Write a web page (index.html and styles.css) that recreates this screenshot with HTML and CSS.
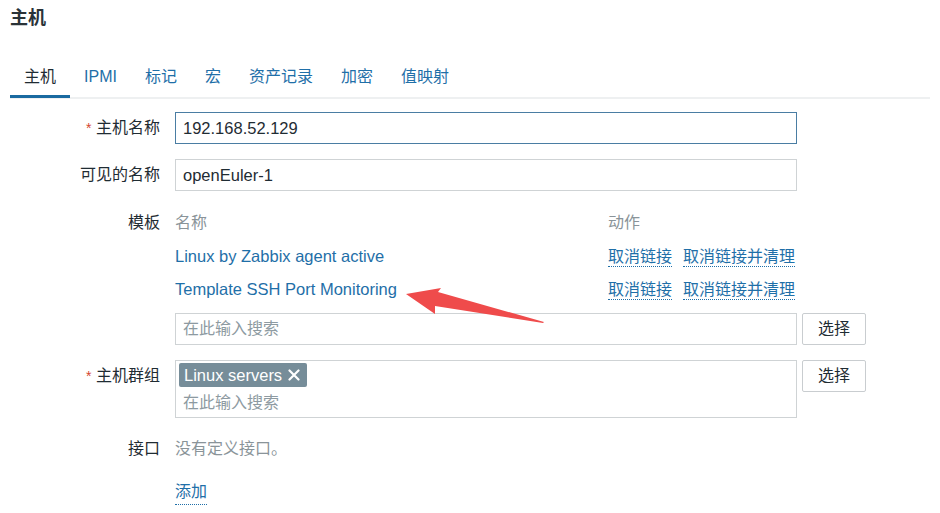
FILE: index.html
```html
<!DOCTYPE html>
<html lang="zh">
<head>
<meta charset="utf-8">
<link rel="stylesheet" href="styles.css">
</head>
<body>
<div class="page">
  <h1 class="title">主机</h1>
  <ul class="tabs">
    <li class="tab active">主机</li>
    <li class="tab">IPMI</li>
    <li class="tab">标记</li>
    <li class="tab">宏</li>
    <li class="tab">资产记录</li>
    <li class="tab">加密</li>
    <li class="tab">值映射</li>
  </ul>
  <div class="form">
    <div class="row">
      <div class="label"><span class="req">*</span> 主机名称</div>
      <div class="field"><div class="input focused">192.168.52.129</div></div>
    </div>
    <div class="row">
      <div class="label">可见的名称</div>
      <div class="field"><div class="input">openEuler-1</div></div>
    </div>
    <div class="row templates">
      <div class="label tl">模板</div>
      <div class="field">
        <div class="trow thead"><span class="tname">名称</span><span class="tact">动作</span></div>
        <div class="trow"><a class="tname link">Linux by Zabbix agent active</a><span class="tact"><a class="dlink first">取消链接</a><a class="dlink">取消链接并清理</a></span></div>
        <div class="trow"><a class="tname link">Template SSH Port Monitoring</a><span class="tact"><a class="dlink first">取消链接</a><a class="dlink">取消链接并清理</a></span></div>
        <div class="withbtn">
          <div class="input ph">在此输入搜索</div>
          <div class="btn">选择</div>
        </div>
      </div>
    </div>
    <div class="row">
      <div class="label gl"><span class="req">*</span> 主机群组</div>
      <div class="field withbtn top">
        <div class="multi">
          <span class="tag">Linux servers <svg class="x" width="12" height="12" viewBox="0 0 12 12"><path d="M1.5 1.5 L10.5 10.5 M10.5 1.5 L1.5 10.5" stroke="#fff" stroke-width="2.2" stroke-linecap="round"/></svg></span>
          <div class="ph2">在此输入搜索</div>
        </div>
        <div class="btn">选择</div>
      </div>
    </div>
    <div class="row plain">
      <div class="label">接口</div>
      <div class="field gray">没有定义接口。</div>
    </div>
    <div class="row plain">
      <div class="label"></div>
      <div class="field"><a class="dlink">添加</a></div>
    </div>
  </div>
  <svg class="arrow" width="160" height="50" viewBox="0 0 160 50">
    <polygon points="6,13 41,7 38,11 144,41 143,42 35,25 35,33" fill="#ef4b4b"/>
  </svg>
</div>
</body>
</html>
```
FILE: styles.css
```css
* { box-sizing: border-box; }
body {
  margin: 0;
  background: #fff;
  font-family: "Liberation Sans", Arial, "Noto Sans CJK SC", sans-serif;
  font-size: 16px;
  color: #1f2c33;
}
.page { position: relative; padding: 0 10px; }
.title {
  margin: 0;
  height: 36px;
  padding-top: 3px;
  font-size: 18px;
  font-weight: bold;
  color: #2a3338;
}
.tabs {
  list-style: none;
  margin: 21px 0 0 0;
  padding: 0;
  display: flex;
  border-bottom: 2px solid #eef0f1;
  height: 42px;
}
.tab {
  padding: 9px 14px 0;
  color: #1f6fa8;
  height: 40px;
  line-height: 22px;
}
.tab.active {
  color: #1f2c33;
  border-bottom: 3px solid #1a6aa0;
  height: 41px;
  margin-bottom: -1px;
}
.form { padding-top: 13px; }
.row { display: flex; margin-bottom: 15px; }
.label {
  width: 150px;
  text-align: right;
  line-height: 32px;
  flex: none;
}
.req { color: #d4462f; font-size: 14px; }
.field { margin-left: 15px; width: 622px; }
.input {
  height: 32px;
  border: 1px solid #cfd3d5;
  padding: 0 7px;
  line-height: 30px;
  width: 622px;
  background: #fff;
  font-size: 16.5px;
}
.input.ph { font-size: 16px; }
.input.focused { border-color: #4a7da3; }
.ph, .ph2 { color: #8d9aa1; }
.templates .tl { line-height: 34px; }
.trow { display: flex; height: 33px; line-height: 33px; white-space: nowrap; }
.thead { height: 34px; line-height: 34px; color: #8a9499; }
.tname { width: 433px; flex: none; }
.tact { display: block; flex: none; }
.link { color: #1f6fa8; font-size: 16.5px; }
.dlink {
  color: #1f6fa8;
  border-bottom: 1px dotted #1f6fa8;
  padding-bottom: 1px;
}
.trow .dlink { line-height: 20px; }
.dlink.first { margin-right: 11px; }
.withbtn { display: flex; gap: 5px; margin-top: 7px; width: 700px; }
.withbtn.top { margin-top: 0; }
.btn {
  width: 64px;
  height: 32px;
  border: 1px solid #c9cdd0;
  border-radius: 2px;
  text-align: center;
  line-height: 30px;
  background: #fff;
  color: #1f2c33;
  flex: none;
}
.multi {
  width: 622px;
  height: 58px;
  border: 1px solid #cfd3d5;
  padding: 2px 3px;
  flex: none;
}
.tag {
  display: inline-flex;
  align-items: center;
  gap: 6px;
  background: #768d99;
  color: #fff;
  height: 24px;
  padding: 0 7px 0 5px;
  border-radius: 2px;
  font-size: 16.5px;
}
.ph2 { padding-left: 4px; line-height: 24px; margin-top: 4px; }
.row.plain { height: 32px; }
.gray { color: #8a9499; line-height: 32px; }
.plain .dlink { display: inline-block; margin-top: 1px; line-height: 22px; }
.arrow {
  position: absolute;
  left: 400px;
  top: 281px;
  overflow: visible;
}
```
